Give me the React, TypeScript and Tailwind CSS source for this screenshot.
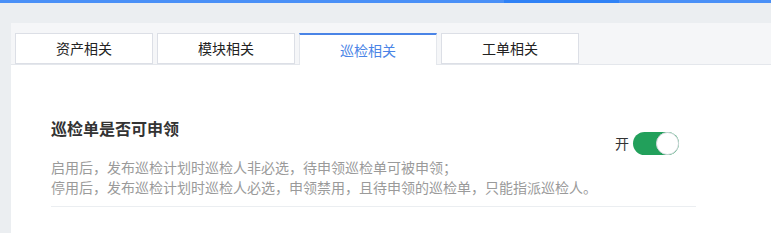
import React from "react";

const tabs = ["资产相关", "模块相关", "巡检相关", "工单相关"];

export default function App() {
  const font = { fontFamily: '"Noto Sans CJK SC", "Noto Sans", sans-serif' };
  return (
    <div className="w-[771px] h-[233px] bg-[#ebeef1] flex flex-col overflow-hidden" style={font}>
      <div className="h-[3px] flex shrink-0">
        <div className="w-[504px] bg-[#4a90f7]" />
        <div className="w-[115px] bg-[#2f82f6]" />
        <div className="flex-1 bg-[#4a90f7]" />
      </div>
      <div className="h-[20px] shrink-0" />
      <div className="flex-1 ml-[11px] flex flex-col">
        <div className="h-[42px] bg-[#f5f6f8] flex items-end pl-[4px] border-b border-[#e4e7ec] shrink-0">
          <div className="flex gap-[4px] -mb-px">
            {tabs.map((t, i) =>
              i === 2 ? (
                <div
                  key={t}
                  className="w-[138px] h-[32px] bg-white border-t-2 border-t-[#4a84e6] border-x border-x-[#e4e7ec] flex items-center justify-center text-[14px] text-[#4a84e6]"
                >
                  {t}
                </div>
              ) : (
                <div
                  key={t}
                  className="w-[138px] h-[31px] mb-px bg-white border border-[#dcdfe6] flex items-center justify-center text-[14px] text-[#222]"
                >
                  {t}
                </div>
              )
            )}
          </div>
        </div>
        <div className="flex-1 bg-white pt-[51px] pl-[40px]">
          <div className="w-[645px] border-b border-[#ebeef1] pb-[9px] flex items-start justify-between">
            <div>
              <div className="text-[16px] leading-[24px] font-bold text-[#333]">巡检单是否可申领</div>
              <div className="mt-[17px] text-[14px] leading-[20px] text-[#9a9a9a]">
                <div>启用后，发布巡检计划时巡检人非必选，待申领巡检单可被申领；</div>
                <div>停用后，发布巡检计划时巡检人必选，申领禁用，且待申领的巡检单，只能指派巡检人。</div>
              </div>
            </div>
            <div className="mt-[16px] mr-[17px] flex items-center gap-[4px]">
              <span className="text-[14px] text-[#333]">开</span>
              <div className="w-[46px] h-[23px] rounded-full bg-[#22a05b] relative">
                <div className="absolute right-0 top-0 w-[23px] h-[23px] rounded-full bg-white border border-[#d5d8de]" />
              </div>
            </div>
          </div>
        </div>
      </div>
    </div>
  );
}
